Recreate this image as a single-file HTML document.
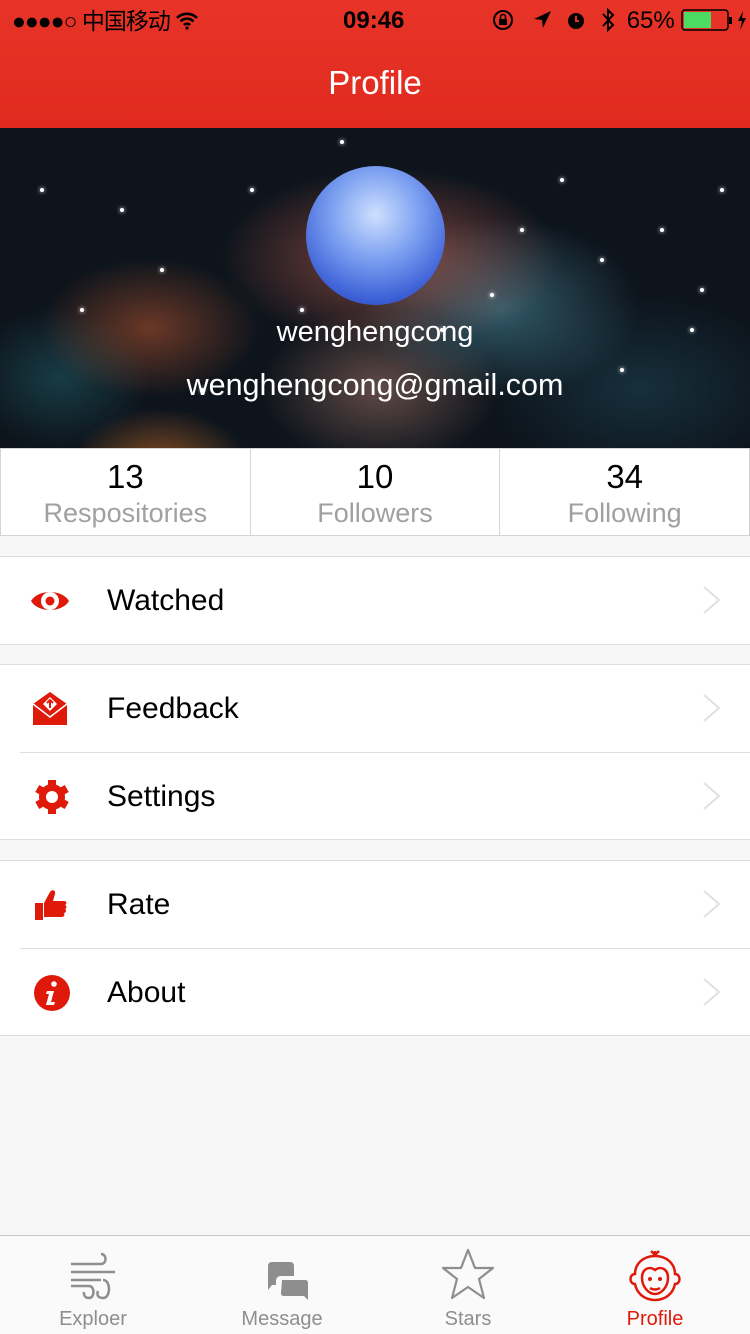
<!DOCTYPE html>
<html><head><meta charset="utf-8"><style>
*{margin:0;padding:0;box-sizing:border-box}
body{width:750px;height:1334px;background:#f7f7f7;font-family:"Liberation Sans","Noto Sans CJK SC",sans-serif;position:relative;overflow:hidden}
.nav{position:absolute;top:0;left:0;width:750px;height:128px;background:linear-gradient(#e83428,#e02a1f)}
.sb{position:absolute;top:6px;font-size:23px;color:#000;height:30px;line-height:30px}
.title{position:absolute;top:64px;width:750px;text-align:center;color:#fff;font-size:33px}
.hero{position:absolute;top:128px;left:0;width:750px;height:320px;overflow:hidden;
background:
radial-gradient(ellipse 90px 60px at 160px 340px,rgba(220,120,40,.6),transparent),
radial-gradient(ellipse 170px 90px at 390px 130px,rgba(230,110,90,.55),transparent),
radial-gradient(ellipse 140px 90px at 500px 180px,rgba(80,150,170,.55),transparent),
radial-gradient(ellipse 110px 70px at 150px 200px,rgba(220,100,50,.45),transparent),
radial-gradient(ellipse 120px 80px at 380px 260px,rgba(200,140,120,.45),transparent),
radial-gradient(ellipse 90px 70px at 60px 250px,rgba(40,120,130,.4),transparent),
radial-gradient(ellipse 150px 90px at 640px 260px,rgba(40,100,120,.35),transparent),
#0d141c}
.star{position:absolute;width:4px;height:4px;border-radius:50%;background:#fff;box-shadow:0 0 4px #fff}
.avatar{position:absolute;left:306px;top:38px;width:139px;height:139px;border-radius:50%;background:radial-gradient(circle at 50% 35%,#cfe0ff,#7a9ff0 40%,#3c5fd6 75%,#2a3fa8)}
.hn{position:absolute;width:750px;text-align:center;color:#fff}
.stats{position:absolute;top:448px;left:0;width:750px;height:88px;background:#fff;display:flex}
.stats div{flex:1;border:1px solid #d4d4d4;border-right:none;text-align:center}
.stats div:last-child{border-right:1px solid #d4d4d4}
.stats b{display:block;font-weight:normal;font-size:33px;color:#000;margin-top:9px;line-height:38px}
.stats span{display:block;font-size:27px;color:#a0a0a0;line-height:34px}
.grp{position:absolute;left:0;width:750px;background:#fff;border-top:1px solid #ddd;border-bottom:1px solid #ddd}
.row{height:87px;position:relative}
.row+.row{border-top:1px solid #ddd;margin-left:20px}
.row+.row .ic{left:12px}.row+.row .lb{left:87px}.row+.row .ch{right:28px}
.ic{position:absolute;left:30px;top:24px;width:40px;height:40px}
.lb{position:absolute;left:107px;top:0;line-height:87px;font-size:30px;color:#000}
.ch{position:absolute;right:28px;top:28px;width:20px;height:30px}
.tab{position:absolute;top:1235px;left:0;width:750px;height:99px;background:#fafafa;border-top:1px solid #c8c8c8}
.ti{position:absolute;top:0;width:150px;text-align:center}
.ti span{position:absolute;top:72px;left:0;width:150px;text-align:center;font-size:20px;color:#8e8e8e}
</style></head><body>
<div class="nav">
<div class="sb" style="left:12px;letter-spacing:-1px">●●●●○ 中国移动 <svg width="24" height="18" viewBox="0 0 24 18" style="vertical-align:-1px"><path d="M2 6a14 14 0 0 1 20 0M5.5 9.5a9 9 0 0 1 13 0M9 13a4 4 0 0 1 6 0" stroke="#000" stroke-width="2.6" fill="none"/><circle cx="12" cy="16" r="1.6"/></svg></div>
<div class="sb" style="left:343px;font-weight:bold;font-size:24px">09:46</div>
<div class="sb" style="left:492px;font-size:24px">
<svg width="24" height="22" viewBox="0 0 24 22" style="vertical-align:-3px"><circle cx="11" cy="11" r="9" stroke="#000" stroke-width="2" fill="none"/><rect x="7" y="10" width="8" height="6" /><path d="M8.5 10V8a2.5 2.5 0 0 1 5 0v2" stroke="#000" stroke-width="1.6" fill="none"/></svg>
<svg width="22" height="22" viewBox="0 0 22 22" style="vertical-align:-3px;margin-left:8px"><path d="M20 2 3 10l8 1 1 8z"/></svg>
<svg width="22" height="22" viewBox="0 0 22 22" style="vertical-align:-3px;margin-left:6px"><circle cx="11" cy="12" r="8"/><path d="M11 7v5h3" stroke="#e83428" stroke-width="2" fill="none"/></svg>
<svg width="16" height="26" viewBox="0 0 16 26" style="vertical-align:-5px;margin-left:6px"><path d="M3 7l10 11-5 5V3l5 5L3 19" stroke="#000" stroke-width="2" fill="none"/></svg>
<span style="margin-left:4px">65%</span>
<svg width="66" height="22" viewBox="0 0 66 22" style="vertical-align:-3px"><rect x="1" y="1" width="46" height="20" rx="3" stroke="#000" stroke-width="1.5" fill="none"/><rect x="3" y="3" width="27" height="16" fill="#4cd964"/><rect x="48" y="8" width="3" height="7"/><path d="M62 2l-5 10h4l-2 9 6-12h-4z"/></svg>
</div>
<div class="title">Profile</div>
</div>
<div class="hero">
<div class="star" style="left:340px;top:12px"></div><div class="star" style="left:250px;top:60px"></div><div class="star" style="left:120px;top:80px"></div><div class="star" style="left:490px;top:165px"></div><div class="star" style="left:560px;top:50px"></div><div class="star" style="left:620px;top:240px"></div><div class="star" style="left:700px;top:160px"></div><div class="star" style="left:40px;top:60px"></div><div class="star" style="left:80px;top:180px"></div><div class="star" style="left:200px;top:260px"></div><div class="star" style="left:690px;top:200px"></div><div class="star" style="left:520px;top:100px"></div><div class="star" style="left:440px;top:200px"></div><div class="star" style="left:300px;top:180px"></div><div class="star" style="left:600px;top:130px"></div><div class="star" style="left:160px;top:140px"></div><div class="star" style="left:720px;top:60px"></div><div class="star" style="left:660px;top:100px"></div>
<div class="avatar"></div>
<div class="hn" style="top:188px;font-size:29px">wenghengcong</div>
<div class="hn" style="top:240px;font-size:30.5px">wenghengcong@gmail.com</div>
</div>
<div class="stats"><div><b>13</b><span>Respositories</span></div><div><b>10</b><span>Followers</span></div><div><b>34</b><span>Following</span></div></div>

<div class="grp" style="top:556px">
<div class="row"><svg class="ic" viewBox="0 0 40 40"><path d="M1 20C8 8 32 8 39 20 32 32 8 32 1 20z" fill="#e01a0a"/><circle cx="20" cy="20" r="9" fill="#fff"/><circle cx="20" cy="20" r="4.5" fill="#e01a0a"/></svg><div class="lb">Watched</div><svg class="ch" viewBox="0 0 20 30"><path d="M2 2l15 13L2 28" stroke="#e0e0e0" stroke-width="2" fill="none"/></svg></div>
</div>
<div class="grp" style="top:664px">
<div class="row"><svg class="ic" viewBox="0 0 40 40"><path d="M3 15L20 3l17 12v21H3z" fill="#e01a0a"/><path d="M20 8l-7 7 7 7 7-7z" fill="#fff"/><path d="M20 11v8M17 14l3-3 3 3" stroke="#e01a0a" stroke-width="2" fill="none"/><path d="M3 15l17 13 17-13" stroke="#fff" stroke-width="1.5" fill="none"/></svg><div class="lb">Feedback</div><svg class="ch" viewBox="0 0 20 30"><path d="M2 2l15 13L2 28" stroke="#e0e0e0" stroke-width="2" fill="none"/></svg></div>
<div class="row"><svg class="ic" viewBox="0 0 40 40"><g fill="#e01a0a"><circle cx="20" cy="20" r="13"/><rect x="16" y="3" width="8" height="34"/><rect x="16" y="3" width="8" height="34" transform="rotate(60 20 20)"/><rect x="16" y="3" width="8" height="34" transform="rotate(120 20 20)"/></g><circle cx="20" cy="20" r="6" fill="#fff"/></svg><div class="lb">Settings</div><svg class="ch" viewBox="0 0 20 30"><path d="M2 2l15 13L2 28" stroke="#e0e0e0" stroke-width="2" fill="none"/></svg></div>
</div>
<div class="grp" style="top:860px">
<div class="row"><svg class="ic" viewBox="0 0 40 40"><path d="M5 18h8v17H5zM14 18l6-11c2-3 6-2 5 2l-2 7h11c3 0 3 3 1 4 2 1 2 3 0 4 2 1 1 4-1 4 1 2 0 4-2 4H14z" fill="#e01a0a"/></svg><div class="lb">Rate</div><svg class="ch" viewBox="0 0 20 30"><path d="M2 2l15 13L2 28" stroke="#e0e0e0" stroke-width="2" fill="none"/></svg></div>
<div class="row"><svg class="ic" viewBox="0 0 40 40"><circle cx="20" cy="20" r="18" fill="#e01a0a"/><circle cx="22" cy="11" r="2.8" fill="#fff"/><path d="M15 18h7l-3 11h4l-1 3h-8l3-11h-3z" fill="#fff"/></svg><div class="lb">About</div><svg class="ch" viewBox="0 0 20 30"><path d="M2 2l15 13L2 28" stroke="#e0e0e0" stroke-width="2" fill="none"/></svg></div>
</div>

<div class="tab">
<div class="ti" style="left:18px"><svg width="60" height="60" viewBox="0 0 60 60" style="margin-top:10px"><path d="M8 18h30c6 0 6-10 0-10M8 26h44M8 34h30M8 40h18c6 0 6 12 0 12s-5-6-5-6M40 34c8 0 8 18 0 18s-5-7-5-7" stroke="#8e8e8e" stroke-width="2.5" fill="none"/></svg><span>Exploer</span></div>
<div class="ti" style="left:207px"><svg width="60" height="60" viewBox="0 0 60 60" style="margin-top:12px"><path d="M20 14h18c3 0 4 2 4 4v10H29c-3 0-5 2-5 5v4h-4l-4 5V18c0-2 1-4 4-4z" fill="#8e8e8e"/><path d="M30 32h23c2 0 3 1 3 3v17l-4-4H32c-2 0-3-1-3-3z" fill="#8e8e8e"/></svg><span>Message</span></div>
<div class="ti" style="left:393px"><svg width="60" height="60" viewBox="0 0 60 60" style="margin-top:10px"><path d="M30 4l7 18h18l-14 11 5 19-16-11-16 11 5-19L5 22h18z" stroke="#8e8e8e" stroke-width="2.2" fill="none" stroke-linejoin="round"/></svg><span>Stars</span></div>
<div class="ti" style="left:580px"><svg width="60" height="60" viewBox="0 0 60 60" style="margin-top:12px"><g stroke="#e01a0a" stroke-width="2.5" fill="none"><path d="M30 8v-5M26 3l4 4 4-4"/><path d="M30 8c-12 0-20 8-20 18 -6 0-6 10 0 10 2 10 10 16 20 16s18-6 20-16c6 0 6-10 0-10 0-10-8-18-20-18z"/><path d="M17 30c0-10 8-12 13-8 5-4 13-2 13 8 0 8-6 16-13 16s-13-8-13-16z"/><path d="M25 40c3 2 7 2 10 0"/></g><circle cx="25" cy="31" r="2" fill="#e01a0a"/><circle cx="35" cy="31" r="2" fill="#e01a0a"/></svg><span style="color:#e01a0a">Profile</span></div>
</div>
</body></html>
